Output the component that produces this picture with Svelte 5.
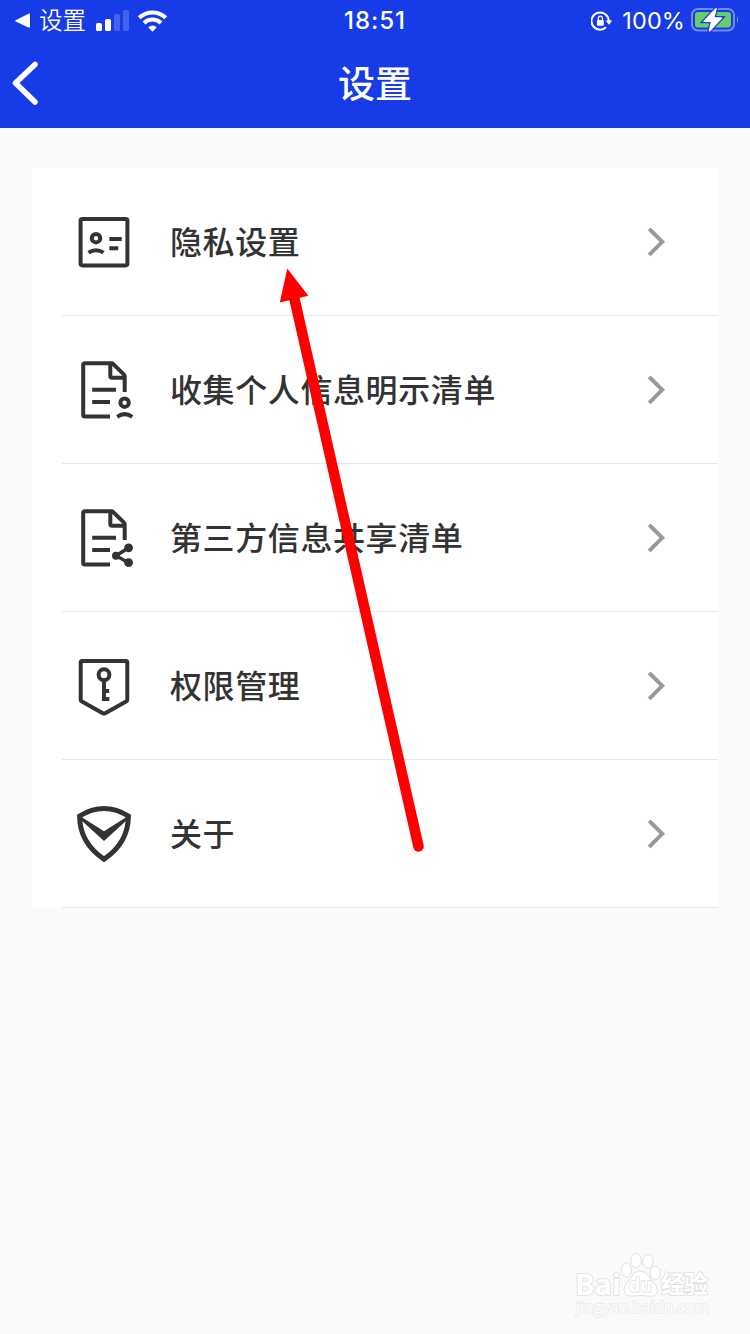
<script>
  const items = [
    { icon: 'privacy', label: '隐私设置' },
    { icon: 'collect', label: '收集个人信息明示清单' },
    { icon: 'share', label: '第三方信息共享清单' },
    { icon: 'permission', label: '权限管理' },
    { icon: 'about', label: '关于' }
  ];
</script>

<div class="screen">
  <header>
    <div class="status">
      <div class="left">
        <svg width="16" height="16" viewBox="0 0 16 16"><path d="M.7 7.3 13.4.7Q15 .2 15 1.8V13.4Q15 15 13.4 14.4L.7 8.6Q-.3 8 .7 7.3Z" fill="#fff" /></svg>
        <span class="back-app">设置</span>
        <svg class="signal" width="34" height="22" viewBox="0 0 34 22" fill="#fff">
          <rect x="0" y="13" width="6" height="8" rx="1.5" />
          <rect x="9" y="9" width="6" height="12" rx="1.5" />
          <rect x="18" y="4" width="6" height="17" rx="1.5" opacity=".2" />
          <rect x="27" y="0" width="6" height="21" rx="1.5" opacity=".2" />
        </svg>
        <svg class="wifi" width="30" height="22" viewBox="0 0 30 22" fill="none" stroke="#fff" stroke-width="4">
          <path d="M1.2 7.7A19.5 19.5 0 0 1 27.8 7.7" />
          <path d="M6 13A12 12 0 0 1 23 13" />
          <path d="M10.2 17.2Q14.5 13.6 18.8 17.2L14.5 21.7Z" fill="#fff" stroke="none" />
        </svg>
      </div>
      <div class="time">18:51</div>
      <div class="right">
        <svg width="22" height="20" viewBox="0 0 22 20">
          <path d="M17.7 10A8.6 8.6 0 1 0 15 16.3" fill="none" stroke="#fff" stroke-width="2" />
          <path d="M14.6 9.6h6.6L18 13.8Z" fill="#fff" />
          <rect x="6" y="9" width="6.8" height="5.8" rx="1" fill="#fff" />
          <path d="M7.4 9V7.2a2 2 0 0 1 4 0V9" fill="none" stroke="#fff" stroke-width="1.3" />
        </svg>
        <span class="percent">100%</span>
        <svg class="battery" width="48" height="24" viewBox="0 0 48 24">
          <rect x="1" y="1" width="42" height="21.5" rx="6" fill="none" stroke="#fff" stroke-opacity=".4" stroke-width="2" />
          <path d="M46 8Q48.2 11.8 46 15Z" fill="#fff" opacity=".5" />
          <rect x="4" y="4" width="36" height="15.5" rx="3" fill="#65cf66" />
          <path d="M25 .8 13.2 13.2h7.6L18.6 22.6 30.4 10h-7.8Z" fill="#fff" stroke="#183be8" stroke-width="4" />
          <path d="M25 .8 13.2 13.2h7.6L18.6 22.6 30.4 10h-7.8Z" fill="#fff" stroke="#fff" stroke-width="1.6" stroke-linejoin="round" />
        </svg>
      </div>
    </div>
    <div class="nav">
      <svg class="back" width="30" height="46" viewBox="0 0 30 46"><path d="M25 4.5 5.5 23 25 42" fill="none" stroke="#fff" stroke-width="5.5" stroke-linecap="round" stroke-linejoin="round" /></svg>
      <h1>设置</h1>
    </div>
  </header>

  <main>
    {#each items as item}
      <div class="row">
        <svg class="icon" width="64" height="64" viewBox="0 0 64 64">
          {#if item.icon === 'privacy'}
            <rect x="6.6" y="8.9" width="46.8" height="46.5" rx="1.8" />
            <circle cx="22" cy="28.2" r="4.2" />
            <path d="M14.5 42.7Q22 37.8 29.5 42.7M35.3 29H47.7M35.3 38.3H44.2" />
          {:else if item.icon === 'collect' || item.icon === 'share'}
            <path d="M36 58.6H11.2Q9.2 58.6 9.2 57V6.8Q9.2 5.2 11.2 5.2H37.6Q38.4 5.2 39 5.8L50 16.6Q50.7 17.3 50.7 18.3V34M36.3 5.2V18Q36.3 19.8 38.2 19.8H50.7M18.2 31.8H42M18.2 43.9H36" />
            {#if item.icon === 'collect'}
              <circle cx="50.6" cy="44.7" r="4.2" />
              <path d="M43.2 58.8Q50.7 53.4 58.2 58.8" />
            {:else}
              <path class="link" d="M54.6 41.7 42 49.7 54.6 56.7" />
              <g class="nodes">
                <circle cx="54.6" cy="41.8" r="4.4" />
                <circle cx="42" cy="49.8" r="4" />
                <circle cx="54.6" cy="56.7" r="4.4" />
              </g>
            {/if}
          {:else if item.icon === 'permission'}
            <path d="M6.7 8.6Q6.7 7 8.3 7H51.7Q53.3 7 53.3 8.6V45.8Q53.3 46.7 52.5 47.2L30.8 59.4Q30 59.8 29.2 59.4L7.5 47.2Q6.7 46.7 6.7 45.8Z" />
            <circle cx="30" cy="20.7" r="5.4" />
            <path d="M30 26V45H35.4M30 37H35.2" />
          {:else}
            <path class="shield" d="M5.6 14Q17.4 6.4 30 6.4T54.4 14Q54.4 40.6 30 57.2 5.6 40.6 5.6 14Z" />
            <path class="solid" d="M5.5 13.7 30 29.3 54.5 13.7 53 18 30 39 7 18Z" />
          {/if}
        </svg>
        <span class="label">{item.label}</span>
        <svg class="chevron" width="20" height="32" viewBox="0 0 20 32"><path d="M3.2 2.8 16.2 15.8 3.2 28.8" /></svg>
      </div>
    {/each}
  </main>

  <svg class="arrow" width="150" height="600" viewBox="270 260 150 600">
    <path d="M292 288 418.5 846.5" stroke="#f00" stroke-width="10.5" stroke-linecap="round" />
    <path d="M287.3 268.5 279.8 302.4 308.4 295.8Z" fill="#f00" />
  </svg>

  <svg class="watermark" width="150" height="74" viewBox="570 1246 150 74">
    <g fill="#fff" stroke="#dfdfdf" stroke-width="1">
      <ellipse cx="626.5" cy="1270" rx="5" ry="7" />
      <ellipse cx="636" cy="1260.5" rx="5.2" ry="7" />
      <ellipse cx="648" cy="1261.3" rx="5.2" ry="6.8" />
      <ellipse cx="655.3" cy="1273" rx="5" ry="6.8" />
      <path d="M640 1271C634 1271 631 1278 627 1283 621 1290 625 1297 633 1296Q641 1295 648 1296C658 1298 660 1289 654 1283 649 1278 647 1271 640 1271Z" />
    </g>
    <g class="mark">
      <text x="575" y="1295" font-size="29" font-weight="700" textLength="46" lengthAdjust="spacingAndGlyphs">Bai</text>
      <text x="629" y="1292" font-size="20" font-weight="700" textLength="23" lengthAdjust="spacingAndGlyphs">du</text>
      <text x="661" y="1293" font-size="24" font-weight="700" textLength="47">经验</text>
      <text class="url" x="576" y="1313" font-size="15.5" textLength="133" lengthAdjust="spacingAndGlyphs">jingyan.baidu.com</text>
    </g>
  </svg>
</div>

<style>
  :global(body) { margin: 0; background: #fafafa; }
  .screen {
    position: relative;
    height: 1334px;
    overflow: hidden;
    background: #fafafa;
    font-family: Inter, "Noto Sans CJK SC", sans-serif;
  }
  header { height: 128px; background: #183be8; color: #fff; }
  .status {
    display: grid;
    grid-template-columns: 1fr auto 1fr;
    align-items: center;
    height: 40px;
    padding: 1px 11px 0 15px;
    box-sizing: border-box;
  }
  .left, .right { display: flex; align-items: center; }
  .right { justify-content: flex-end; }
  .back-app { font: 350 23.5px/37px "Noto Sans CJK SC", sans-serif; margin: 0 0 2px 8px; }
  .signal { margin-left: 10px; }
  .wifi { margin-left: 8px; }
  .time { font-size: 24px; font-weight: 500; letter-spacing: 1px; margin: 0 0 0 -4px; }
  .percent { font-size: 23.5px; letter-spacing: .1px; margin: 0 0 0 9px; }
  .battery { margin: 0 0 1px 6px; }
  .nav {
    display: grid;
    grid-template-columns: 60px 1fr 60px;
    align-items: center;
    height: 88px;
  }
  .back { margin-left: 10px; margin-top: -2px; }
  h1 { margin: 0; text-align: center; font: 500 37px/84px "Noto Sans CJK SC", sans-serif; padding-bottom: 4px; }
  main { margin: 40px 32px 0; background: #fff; }
  .row {
    display: flex;
    align-items: center;
    height: 148px;
    padding: 0 52px 0 42px;
    box-sizing: border-box;
    background: linear-gradient(#e8e8e8, #e8e8e8) 30px 100% / 100% 1px no-repeat;
  }
  .icon { fill: none; stroke: #333; stroke-width: 4; }
  .icon .link { stroke-width: 3.4; }
  .icon .shield { stroke-width: 5; }
  .icon .nodes, .icon .solid { fill: #333; stroke: none; }
  .label {
    flex: 1;
    margin-left: 32px;
    padding-bottom: 4px;
    color: #333;
    font: 500 32px/48px "Noto Sans CJK SC", sans-serif;
    letter-spacing: .6px;
  }
  .chevron { fill: none; stroke: #999; stroke-width: 4; }
  .arrow { position: absolute; left: 270px; top: 260px; overflow: visible; }
  .watermark { position: absolute; left: 570px; top: 1246px; }
  .mark {
    fill: #fff;
    stroke: #dedede;
    stroke-width: 1.6px;
    paint-order: stroke;
    font-family: "Open Sans", "Noto Sans CJK SC", sans-serif;
  }
  .url { stroke: #e8e8e8; stroke-width: 1.3px; }
</style>
